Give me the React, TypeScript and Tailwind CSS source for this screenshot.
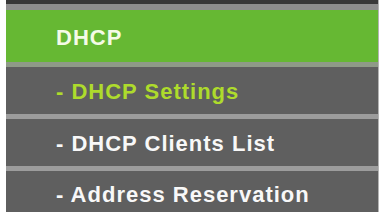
import React from 'react';

const items = [
  { label: '- DHCP Settings', active: true },
  { label: '- DHCP Clients List', active: false },
  { label: '- Address Reservation', active: false },
];

export default function App() {
  return (
    <div className="w-[379px] h-[212px] bg-white overflow-hidden">
      <div
        className="ml-[6px] w-[372px] border-r border-[#b4b4b4] box-content"
        style={{ fontFamily: '"Liberation Sans", Arial, sans-serif' }}
      >
        {/* Top edge */}
        <div className="h-[4px] bg-[#383838]"></div>
        <div className="h-[6px] bg-[#8e8e8e]"></div>

        {/* Section header */}
        <div className="h-[48px] bg-[#66b833] flex items-center pl-[50px] pt-[4px] border-b-[5px] border-[#8f9a88] box-content">
          <span className="text-[22px] font-bold tracking-[1px] text-[#f4fbe6] leading-none">DHCP</span>
        </div>

        {/* Menu items */}
        {items.map((item, i) => (
          <div
            key={item.label}
            className={`${i === 2 ? 'h-[44px]' : 'h-[45px]'} bg-[#5f5f5f] flex items-center pl-[50px] pt-[2px] border-b-[5px] border-[#9c9c9c] box-content`}
          >
            <span
              className={`text-[22px] font-bold tracking-[1px] leading-none ${item.active ? 'text-[#aedb2c]' : 'text-[#f8f8f8]'}`}
            >
              {item.label}
            </span>
          </div>
        ))}
      </div>
    </div>
  );
}
